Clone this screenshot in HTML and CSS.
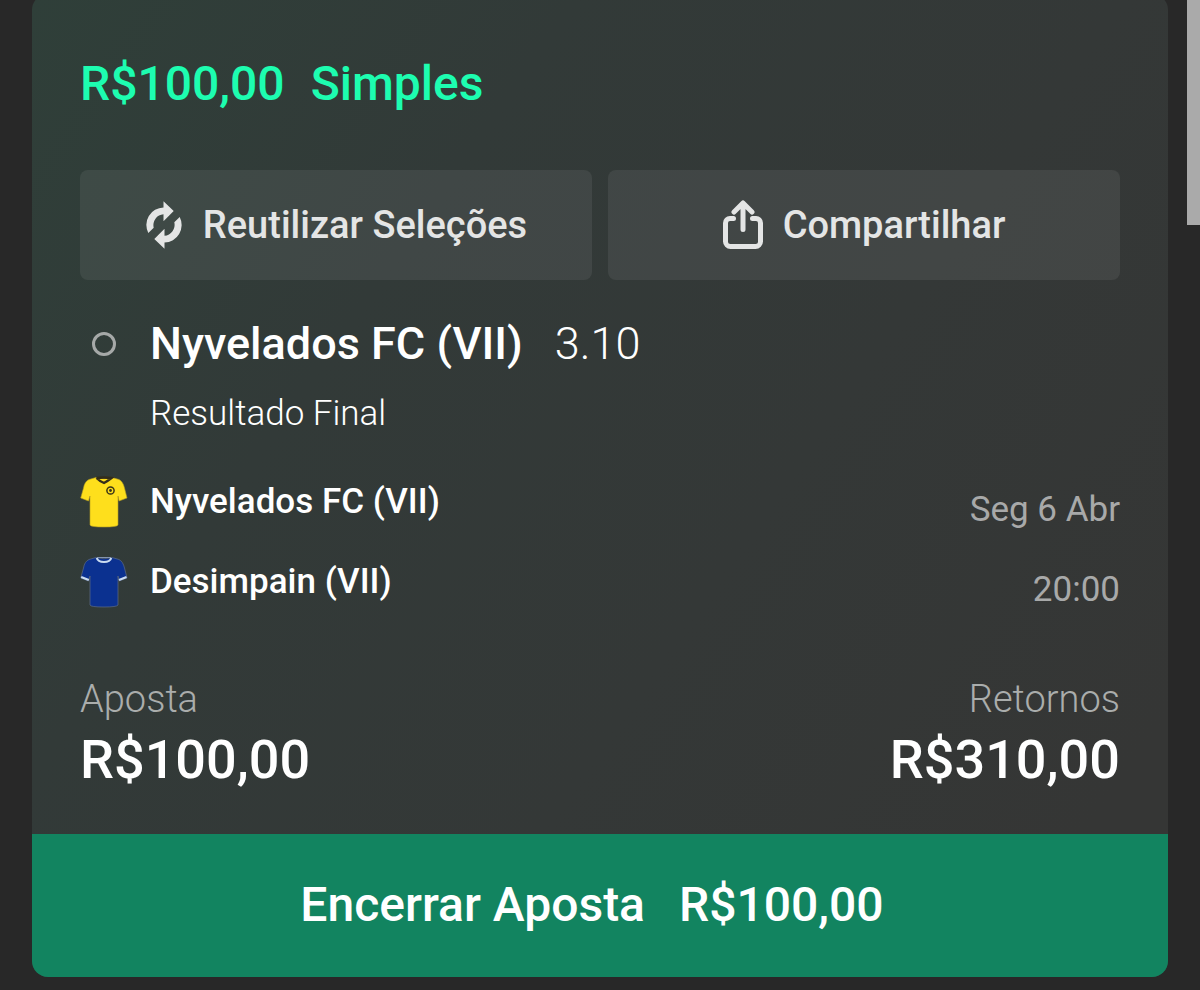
FILE: index.html
```html
<!DOCTYPE html>
<html lang="pt-BR">
<head>
<meta charset="utf-8">
<meta name="viewport" content="width=device-width, initial-scale=1">
<title>Minhas Apostas</title>
<link rel="stylesheet" href="styles.css">
</head>
<body>
<main class="page">
  <article class="card">
    <div class="card-body">
      <h1 class="bet-title"><span>R$100,00</span><span>Simples</span></h1>
      <div class="actions">
        <button class="action" type="button">
          <svg class="icon-reuse" viewBox="0 0 38 48" aria-hidden="true">
            <path d="M3.300 32A17.500 17.500 0 0 1 18.500 6.500V0.300L28.700 10L18.500 20.300V13.200A11 11 0 0 0 8.700 26.700Z"/>
            <path d="M34.700 16A17.500 17.500 0 0 1 19.500 41.500V47.700L9.300 38L19.500 27.700V34.800A11 11 0 0 0 29.300 21.300Z"/>
          </svg>
          <span>Reutilizar Seleções</span>
        </button>
        <button class="action" type="button">
          <svg class="icon-share" viewBox="0 0 40 50" aria-hidden="true">
            <path d="M10.500 18.500H7A4.500 4.500 0 0 0 2.500 23V41.500A5 5 0 0 0 7.500 46.500H32.500A5 5 0 0 0 37.500 41.500V23A4.500 4.500 0 0 0 33 18.500H29.500M20 29.500V4M11 12L20 3L29 12"/>
          </svg>
          <span>Compartilhar</span>
        </button>
      </div>
      <section class="selection">
        <span class="marker"></span>
        <h2 class="pick"><span>Nyvelados FC (VII)</span><span class="odds">3.10</span></h2>
        <p class="market">Resultado Final</p>
      </section>
      <section class="fixture">
        <ul class="teams">
          <li class="team">
            <svg class="shirt" viewBox="0 0 48 52" aria-hidden="true">
              <path fill="#fedf1c" stroke="#b59d20" stroke-width=".6" d="M16 1.500Q24 4 32 1.500L39 3.500Q43 5.500 44.500 12L47 22L39 25L38 20V49Q37 51 24 51Q10.500 51 10 49V20L8.500 25L0.700 22L3.500 12Q4.500 5.500 9 3.500Z"/>
              <path fill="none" stroke="#332d1b" stroke-width="2.400" d="M16.500 2Q24 1 31.500 2Q27 5.500 24 7Q20 5.500 16.500 2"/>
              <circle cx="30.500" cy="14.500" r="3.600" fill="none" stroke="#3a3517" stroke-width="1.500"/>
              <circle cx="30.500" cy="14.500" r="1.400" fill="#3a3517"/>
            </svg>
            <span>Nyvelados FC (VII)</span>
          </li>
          <li class="team">
            <svg class="shirt" viewBox="0 0 48 52" aria-hidden="true">
              <path fill="#0b3190" stroke="#566580" stroke-width=".8" d="M16 1.500Q24 4 32 1.500L39 3.500Q43 5.500 44.500 12L47 22L39 25L38 20V49Q37 51 24 51Q10.500 51 10 49V20L8.500 25L0.700 22L3.500 12Q4.500 5.500 9 3.500Z"/>
              <path fill="none" stroke="#cbdcf1" stroke-width="2.200" d="M16.800 2Q18 6 24 6Q30 6 31.200 2M1.200 21L8.800 24M46.500 21L39 24"/>
              <path fill="none" stroke="#8495ae" d="M17 1.500H31"/>
            </svg>
            <span>Desimpain (VII)</span>
          </li>
        </ul>
        <div class="kickoff"><span>Seg 6 Abr</span><time>20:00</time></div>
      </section>
      <dl class="totals">
        <div><dt>Aposta</dt><dd>R$100,00</dd></div>
        <div class="returns"><dt>Retornos</dt><dd>R$310,00</dd></div>
      </dl>
    </div>
    <button class="cash-out" type="button"><span>Encerrar Aposta</span><span>R$100,00</span></button>
  </article>
  <div class="scroll-thumb"></div>
</main>
</body>
</html>
```
FILE: styles.css
```css
* { box-sizing: border-box; }
body {
  margin: 0;
  background: #282828;
  color: #fff;
  font-family: Roboto, "Liberation Sans", sans-serif;
}
h1, h2, p, ul, dl, dd { margin: 0; padding: 0; }
button { border: 0; font: inherit; color: inherit; cursor: pointer; }

.page {
  display: flow-root;
  position: relative;
  overflow: hidden;
  padding: 0 32px 13px;
}
.card {
  margin-top: -6px;
  border-radius: 16px;
  overflow: hidden;
  background: linear-gradient(125deg, #2f3f39 0%, #323a38 30%, #343837 60%, #353635 90%);
}
.card-body { padding: 62px 48px 38px; }

.bet-title {
  display: flex;
  gap: 26px;
  color: #1dfdb0;
  font-size: 48px;
  font-weight: 500;
  line-height: 56px;
}

.actions {
  display: grid;
  grid-template-columns: 1fr 1fr;
  gap: 16px;
  margin-top: 58px;
}
.action {
  display: flex;
  align-items: center;
  justify-content: center;
  gap: 20px;
  height: 110px;
  padding: 0;
  border-radius: 8px;
  background: rgba(255, 255, 255, 0.07);
  color: #e4e5e5;
  font-size: 38px;
  font-weight: 500;
}
.icon-reuse { width: 38px; height: 48px; fill: currentColor; }
.icon-share {
  width: 40px;
  height: 50px;
  fill: none;
  stroke: currentColor;
  stroke-width: 5;
  stroke-linecap: round;
  stroke-linejoin: round;
}

.selection {
  display: grid;
  grid-template-columns: 48px 1fr;
  column-gap: 22px;
  row-gap: 20px;
  margin-top: 36px;
}
.marker {
  place-self: center;
  width: 24px;
  height: 24px;
  border: 3px solid #a6a9a8;
  border-radius: 50%;
}
.pick {
  display: flex;
  gap: 32px;
  font-size: 45px;
  font-weight: 500;
  line-height: 56px;
}
.odds { font-weight: 300; }
.market {
  grid-column: 2;
  font-size: 35px;
  font-weight: 300;
  line-height: 44px;
}

.fixture {
  display: flex;
  justify-content: space-between;
  margin-top: 26px;
  font-size: 35px;
  line-height: 80px;
}
.teams { list-style: none; font-weight: 500; }
.team { display: flex; align-items: center; gap: 22px; }
.shirt { width: 48px; height: 52px; }
.kickoff {
  display: flex;
  flex-direction: column;
  align-items: flex-end;
  padding-top: 8px;
  color: #a8a9a9;
}

.totals { display: flex; justify-content: space-between; margin-top: 44px; }
.totals dt {
  color: #aaadac;
  font-size: 38px;
  font-weight: 300;
  line-height: 50px;
}
.totals dd { font-size: 54px; font-weight: 500; line-height: 72px; }
.returns { text-align: right; }

.cash-out {
  display: flex;
  align-items: center;
  justify-content: center;
  gap: 34px;
  width: 100%;
  padding: 43px 16px 44px 0;
  background: #128460;
  font-size: 48px;
  font-weight: 500;
  line-height: 56px;
}

.scroll-thumb {
  position: absolute;
  top: 0;
  right: 0;
  width: 13px;
  height: 225px;
  background: #aaa;
}
```
